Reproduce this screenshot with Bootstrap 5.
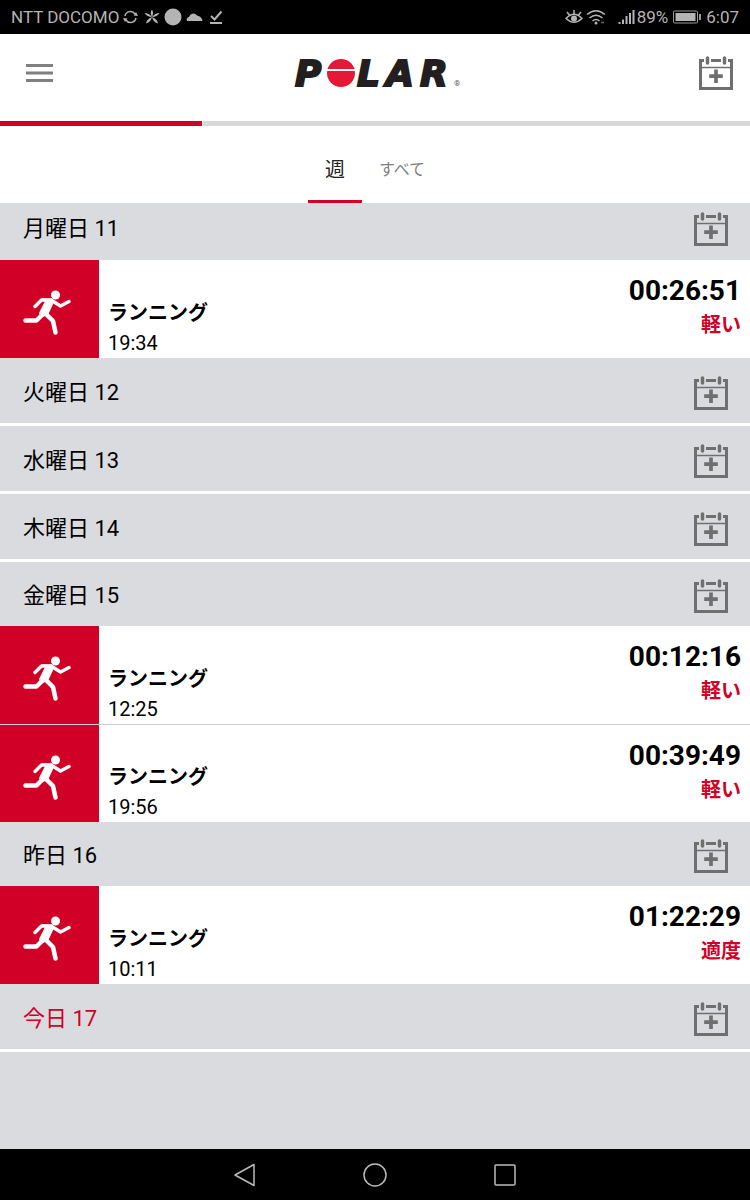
<!DOCTYPE html>
<html lang="ja">
<head>
<meta charset="utf-8">
<meta name="viewport" content="width=device-width, initial-scale=1">
<title>Polar</title>
<link href="https://cdn.jsdelivr.net/npm/bootstrap@5.3.0/dist/css/bootstrap.min.css" rel="stylesheet">
<style>
  body { font-family: Roboto, "Noto Sans CJK JP", sans-serif; background: #dadbdf; color: #000; }
  button { background: none; border: 0; padding: 0; display: block; }
  svg { display: block; flex: none; }
  .status { height: 34px; background: #000; color: #b4b4b4; font-size: 17px; line-height: 20px; padding: 0 11px; }
  .topbar { height: 87px; padding: 0 17px 10px 26px; }
  .side { flex: 1 1 0; }
  .track { height: 5px; border-radius: 0; background: #d9d9d9; }
  .track .progress-bar { width: 27%; background: #d10027; border-right: 1px solid #fff; }
  .tab { height: 77px; padding: 14px 17px 0; line-height: 24px; font-size: 16px; color: #808080; text-decoration: none; border-bottom: 3px solid transparent; }
  .tab.active { font-size: 20px; color: #222; border-color: #d10027; }
  .day { height: 64px; padding: 0 22px 13px 23px; font-size: 22px; line-height: 34px; color: #000; }
  .day.first { height: 57px; padding-bottom: 14px; }
  .day.today { color: #d10027; }
  .day h2 { font: inherit; margin: 0; }
  .day.ruled { height: 68px; border-bottom: 3px solid #fff; }
  .workout { height: 98px; color: #000; text-decoration: none; }
  .workout + .workout { border-top: 1px solid #ccc; }
  .sport { width: 99px; padding: 8px 5px 0 0; background: #d10027; color: #fff; }
  .what { padding: 0 9px; font-size: 20px; line-height: 30px; }
  .result { padding: 14px 9px 0; }
  .duration { font-size: 28px; line-height: 34px; font-weight: 700; }
  .effort { font-size: 20px; line-height: 34px; font-weight: 700; color: #d10027; }
  .brand-text { font: italic bold 36px "DejaVu Sans", sans-serif; fill: #231f20; stroke: #231f20; stroke-width: 2px; }
  .sysbar { height: 51px; background: #000; color: #bbb; }
  .sysbar button { width: 130px; color: inherit; }
</style>
</head>
<body>
<svg width="0" height="0" class="position-absolute" aria-hidden="true">
  <symbol id="cal" viewBox="0 0 34 34">
    <g fill="none" stroke="#6f6f6f">
      <path d="M5 4.500H1.500V32.500H32.500V4.500H29" stroke-width="3"/>
      <path d="M1 11.500H33" stroke-width="1.500"/>
      <path d="M12 4.500H22" stroke-width="3"/>
      <path d="M8.500 2V7M25.500 2V7" stroke-width="3.500" stroke-linecap="round"/>
      <path d="M17 13.500V27M10.200 20.200H23.800" stroke-width="3.700"/>
    </g>
  </symbol>
  <symbol id="run" viewBox="0 0 48 46">
    <circle cx="32.500" cy="5" r="4.500" fill="#fff"/>
    <path d="M18 8.500H29L31 12L25 25L17 28L16 23L22 11Z" fill="#fff"/>
    <g fill="none" stroke="#fff" stroke-linecap="round" stroke-linejoin="round">
      <path d="M12 16.500L18.500 10H28L37.500 16L46 11.500" stroke-width="3.400"/>
      <path d="M19 25L13.500 30.500H2.500" stroke-width="4.500"/>
      <path d="M23 24L30 31L32.500 42.500" stroke-width="4.500"/>
    </g>
  </symbol>
</svg>

<div class="d-flex flex-column min-vh-100">
  <div class="status d-flex align-items-center justify-content-between">
    <div class="d-flex align-items-center">
      <span>NTT DOCOMO</span>
      <svg class="ms-1" width="100" height="18" viewBox="0 0 100 18" fill="none" stroke="#b4b4b4">
        <path d="M2 8A5.500 5.500 0 0 1 12 6M13 10A5.500 5.500 0 0 1 3 12" stroke-width="1.500"/>
        <path d="M10.500 7.500L15 8L13 4ZM4.500 10.500L0 10L2 14Z" fill="#b4b4b4" stroke="none"/>
        <g fill="#b4b4b4" stroke="none">
          <path d="M29 9Q26.500 5 29 1.500Q31 5 29 9Z"/><path d="M29 9Q24 9 21.500 5Q26 5 29 9Z"/><path d="M29 9Q32 5 36.500 5Q34 9 29 9Z"/><path d="M29 9Q28 14 23 15.500Q23.500 11 29 9Z"/><path d="M29 9Q34.500 11 35 15.500Q30 14 29 9Z"/>
          <circle cx="50" cy="9" r="8.500"/>
          <path d="M64 13A3 3 0 0 1 66 9A4.500 4.500 0 0 1 74 7.500Q79 8.500 79.500 13Z"/>
        </g>
        <path d="M88 8L91.500 11.500L98.500 3.500M87 15H99" stroke-width="2"/>
      </svg>
    </div>
    <div class="d-flex align-items-center">
      <svg width="72" height="18" viewBox="0 0 72 18" fill="none" stroke="#b4b4b4" stroke-width="1.500">
        <path d="M1 10.500Q9 2 17 10.500Q9 18 1 10.500ZM2 4L4.500 7M9 2V5.500M16 4L13.500 7"/>
        <circle cx="9" cy="10.500" r="3" fill="#b4b4b4" stroke="none"/>
        <path d="M22 6.500Q31 -1 40 6.500M24.500 10Q31 4.500 37.500 10M27.500 13Q31 10 34.500 13"/>
        <circle cx="31" cy="15" r="1.500" fill="#b4b4b4" stroke="none"/>
        <path d="M36 14.500H39" stroke="#666"/>
        <path d="M54.500 16V14M58 16V11.500M61.500 16V8M65 16V5M68.500 16V2" stroke-width="2"/>
      </svg>
      <span>89%</span>
      <svg class="mx-1" width="30" height="14" viewBox="0 0 30 14"><rect x="1.500" y="1" width="24" height="12" rx="1" fill="none" stroke="#999"/><path d="M3.500 3H23.500V11H3.500Z" fill="#b4b4b4"/><path d="M27 4H29V10H27Z" fill="#999"/></svg>
      <span>6:07</span>
    </div>
  </div>

  <header class="topbar bg-white d-flex align-items-center">
    <div class="side"><button type="button" aria-label="メニュー"><svg width="27" height="18" viewBox="0 0 27 18"><path d="M0 1.500H27M0 9H27M0 16.500H27" stroke="#808080" stroke-width="3"/></svg></button></div>
    <svg class="me-2" width="169" height="64" viewBox="0 0 169 64">
      <text class="brand-text" y="45" x="4">P</text>
      <circle cx="50" cy="32" r="14" fill="#e51937"/>
      <text class="brand-text" y="45" x="66">L</text>
      <text class="brand-text" y="45" x="95">A</text>
      <text class="brand-text" y="45" x="129">R</text>
      <path d="M35 29H65" stroke="#fff" stroke-width="2"/>
      <text x="163" y="45" font-size="8" fill="#555">®</text>
    </svg>
    <div class="side d-flex justify-content-end"><button type="button" aria-label="追加"><svg width="34" height="34"><use href="#cal"/></svg></button></div>
  </header>
  <div class="progress track"><div class="progress-bar"></div></div>

  <nav class="bg-white d-flex justify-content-center">
    <a class="tab active d-flex align-items-center" href="#">週</a>
    <a class="tab d-flex align-items-center" href="#">すべて</a>
  </nav>

  <main class="flex-grow-1">
    <div class="day first d-flex align-items-end justify-content-between"><h2>月曜日 11</h2><button type="button" aria-label="追加"><svg width="34" height="34"><use href="#cal"/></svg></button></div>
    <a class="workout bg-white d-flex" href="#">
      <div class="sport d-flex align-items-center justify-content-center"><svg width="48" height="46"><use href="#run"/></svg></div>
      <div class="what flex-grow-1 align-self-end"><div class="fw-bold">ランニング</div><div>19:34</div></div>
      <div class="result text-end"><div class="duration">00:26:51</div><div class="effort">軽い</div></div>
    </a>
    <div class="day ruled d-flex align-items-end justify-content-between"><h2>火曜日 12</h2><button type="button" aria-label="追加"><svg width="34" height="34"><use href="#cal"/></svg></button></div>
    <div class="day ruled d-flex align-items-end justify-content-between"><h2>水曜日 13</h2><button type="button" aria-label="追加"><svg width="34" height="34"><use href="#cal"/></svg></button></div>
    <div class="day ruled d-flex align-items-end justify-content-between"><h2>木曜日 14</h2><button type="button" aria-label="追加"><svg width="34" height="34"><use href="#cal"/></svg></button></div>
    <div class="day d-flex align-items-end justify-content-between"><h2>金曜日 15</h2><button type="button" aria-label="追加"><svg width="34" height="34"><use href="#cal"/></svg></button></div>
    <a class="workout bg-white d-flex" href="#">
      <div class="sport d-flex align-items-center justify-content-center"><svg width="48" height="46"><use href="#run"/></svg></div>
      <div class="what flex-grow-1 align-self-end"><div class="fw-bold">ランニング</div><div>12:25</div></div>
      <div class="result text-end"><div class="duration">00:12:16</div><div class="effort">軽い</div></div>
    </a>
    <a class="workout bg-white d-flex" href="#">
      <div class="sport d-flex align-items-center justify-content-center"><svg width="48" height="46"><use href="#run"/></svg></div>
      <div class="what flex-grow-1 align-self-end"><div class="fw-bold">ランニング</div><div>19:56</div></div>
      <div class="result text-end"><div class="duration">00:39:49</div><div class="effort">軽い</div></div>
    </a>
    <div class="day d-flex align-items-end justify-content-between"><h2>昨日 16</h2><button type="button" aria-label="追加"><svg width="34" height="34"><use href="#cal"/></svg></button></div>
    <a class="workout bg-white d-flex" href="#">
      <div class="sport d-flex align-items-center justify-content-center"><svg width="48" height="46"><use href="#run"/></svg></div>
      <div class="what flex-grow-1 align-self-end"><div class="fw-bold">ランニング</div><div>10:11</div></div>
      <div class="result text-end"><div class="duration">01:22:29</div><div class="effort">適度</div></div>
    </a>
    <div class="day today ruled d-flex align-items-end justify-content-between"><h2>今日 17</h2><button type="button" aria-label="追加"><svg width="34" height="34"><use href="#cal"/></svg></button></div>
  </main>

  <footer class="sysbar d-flex justify-content-center align-items-center">
    <button type="button" aria-label="戻る"><svg class="mx-auto" width="24" height="24" viewBox="0 0 24 24"><path d="M21 1.500V22.500L2 12Z" fill="none" stroke="#bbb" stroke-width="1.500" stroke-linejoin="round"/></svg></button>
    <button type="button" aria-label="ホーム"><svg class="mx-auto" width="24" height="24" viewBox="0 0 24 24"><circle cx="12" cy="12" r="11" fill="none" stroke="#bbb" stroke-width="1.500"/></svg></button>
    <button type="button" aria-label="履歴"><svg class="mx-auto" width="24" height="24" viewBox="0 0 24 24"><rect x="2" y="2" width="20" height="20" rx="1" fill="none" stroke="#bbb" stroke-width="1.500"/></svg></button>
  </footer>
</div>
<script src="https://cdn.jsdelivr.net/npm/bootstrap@5.3.0/dist/js/bootstrap.bundle.min.js"></script>
</body>
</html>
